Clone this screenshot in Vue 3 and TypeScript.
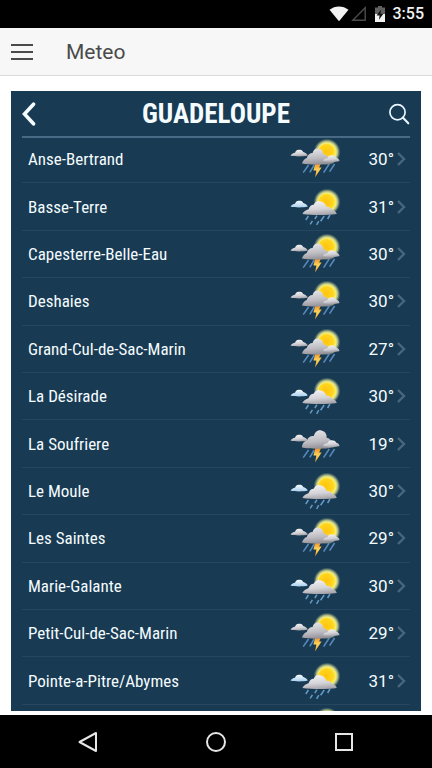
<script setup lang="ts">
type Sky = 'storm' | 'rain' | 'thunder'

interface Place {
  name: string
  temp: number
  sky: Sky
}

const skyLabels: Record<Sky, string> = {
  storm: 'Orages et éclaircies',
  rain: 'Averses',
  thunder: 'Orages',
}

const places: Place[] = [
  { name: 'Anse-Bertrand', temp: 30, sky: 'storm' },
  { name: 'Basse-Terre', temp: 31, sky: 'rain' },
  { name: 'Capesterre-Belle-Eau', temp: 30, sky: 'storm' },
  { name: 'Deshaies', temp: 30, sky: 'storm' },
  { name: 'Grand-Cul-de-Sac-Marin', temp: 27, sky: 'storm' },
  { name: 'La Désirade', temp: 30, sky: 'rain' },
  { name: 'La Soufriere', temp: 19, sky: 'thunder' },
  { name: 'Le Moule', temp: 30, sky: 'rain' },
  { name: 'Les Saintes', temp: 29, sky: 'storm' },
  { name: 'Marie-Galante', temp: 30, sky: 'rain' },
  { name: 'Petit-Cul-de-Sac-Marin', temp: 29, sky: 'storm' },
  { name: 'Pointe-a-Pitre/Abymes', temp: 31, sky: 'rain' },
]
</script>

<template>
  <div class="screen">
    <div class="status">
      <svg class="wifi" viewBox="0 0 20 16" aria-hidden="true">
        <path d="M0.5 3.8C6 -0.7 14 -0.7 19.5 3.8L10 15.3Z" fill="#f2f2f2" />
      </svg>
      <svg class="signal" viewBox="0 0 16 16" aria-hidden="true">
        <path d="M1.8 14.2H14.2V1.8Z" fill="none" stroke="#4c4c4c" stroke-width="1.4" />
      </svg>
      <svg class="battery" viewBox="0 0 10 16" aria-hidden="true">
        <path d="M0 1.5H3V0H7V1.5H10V8H0Z" fill="#606060" />
        <path d="M0 8H10V16H0Z" fill="#f2f2f2" />
        <path d="M6 3.5L1.6 9.5H4.6L4 13.8L8.4 7.8H5.4Z" fill="#111" />
      </svg>
      <span class="clock">3:55</span>
    </div>

    <header class="appbar">
      <button class="menu" type="button" aria-label="Menu">
        <svg viewBox="0 0 22 18" aria-hidden="true">
          <path d="M0 2H22M0 9H22M0 16H22" stroke="#4a4a4a" stroke-width="2" />
        </svg>
      </button>
      <h1>Meteo</h1>
    </header>

    <main>
      <section class="panel">
        <div class="heading">
          <button class="back" type="button" aria-label="Retour">
            <svg viewBox="0 0 14 24" aria-hidden="true">
              <path d="M11.5 2.2L2.5 12L11.5 21.8" fill="none" stroke="#f4fcff" stroke-width="3.6" stroke-linecap="round" />
            </svg>
          </button>
          <h2>GUADELOUPE</h2>
          <button class="search" type="button" aria-label="Rechercher">
            <svg viewBox="0 0 22 22" aria-hidden="true">
              <circle cx="9.5" cy="9.3" r="7.6" fill="none" stroke="#eaf6ff" stroke-width="1.7" />
              <path d="M14.8 14.6L20.3 20.3" stroke="#eaf6ff" stroke-width="2.1" stroke-linecap="round" />
            </svg>
          </button>
        </div>

        <!-- Shared gradients and artwork for the weather icons -->
        <svg class="defs" aria-hidden="true">
          <defs>
            <radialGradient id="glow">
              <stop offset="0.66" stop-color="#f4f08e" />
              <stop offset="0.8" stop-color="#c5cd8a" stop-opacity="0.85" />
              <stop offset="1" stop-color="#7f9a7c" stop-opacity="0" />
            </radialGradient>
            <radialGradient id="disc" cx="0.45" cy="0.5">
              <stop offset="0" stop-color="#ffc40f" />
              <stop offset="0.8" stop-color="#ffd51e" />
              <stop offset="1" stop-color="#fae84a" />
            </radialGradient>
            <linearGradient id="cloud" x1="0.3" y1="0" x2="0.5" y2="1">
              <stop offset="0" stop-color="#f4f4f6" />
              <stop offset="0.6" stop-color="#d3d3d8" />
              <stop offset="1" stop-color="#a3a3a9" />
            </linearGradient>
            <linearGradient id="dark" x1="0.3" y1="0" x2="0.5" y2="1">
              <stop offset="0" stop-color="#e6e5e8" />
              <stop offset="0.6" stop-color="#bdbcc2" />
              <stop offset="1" stop-color="#918f95" />
            </linearGradient>
            <linearGradient id="blue" x1="0" y1="0" x2="0" y2="1">
              <stop offset="0" stop-color="#f7fcff" />
              <stop offset="1" stop-color="#a9cfee" />
            </linearGradient>
            <linearGradient id="bolt" x1="0" y1="0" x2="0" y2="1">
              <stop offset="0" stop-color="#f08a1c" />
              <stop offset="0.5" stop-color="#ffd55a" />
              <stop offset="1" stop-color="#f59a25" />
            </linearGradient>
            <g id="sun">
              <circle cx="39" cy="14" r="13.5" fill="url(#glow)" />
              <circle cx="39" cy="14" r="8.8" fill="url(#disc)" />
            </g>
            <path
              id="puff"
              d="M2.5 17.6C3.4 15.8 5.2 15.2 7 14.8C7.8 12.4 9.4 11.3 11.4 11.8C13.2 11.2 14.8 12.6 15.2 14C17 14.4 19 15.6 19.8 17.6C15 18.8 7 18.8 2.5 17.6Z"
            />
            <g id="downpour">
              <path
                d="M20.6 27L15.2 34.6M26.2 27L21.8 34.4M41.2 26L35.6 34.6M46.6 26L41.6 33.6"
                fill="none" stroke="#5789bd" stroke-width="1.6"
              />
              <path d="M27.4 25H33L31.2 29.4H33.6L27 39.4L28.4 32.4H25.4Z" fill="url(#bolt)" />
            </g>
            <path
              id="sidecloud"
              d="M34.8 23C35.6 21.2 37.4 20.4 39.4 20.2C40.2 17.6 42.6 16.6 44.8 17.4C47 17.2 48.2 18.8 48.6 20C50.2 20.2 51.3 21.4 51.6 23C47 24.4 40 24.4 34.8 23Z"
              fill="url(#cloud)"
            />
          </defs>
          <symbol id="sky-storm" viewBox="0 0 54 42">
            <use href="#sun" />
            <use href="#puff" fill="url(#cloud)" />
            <use href="#downpour" />
            <path
              d="M14 25.6C14.6 23.2 16.4 20.8 18.8 20C19.4 17 21.8 15 24.6 15C25.4 11.6 28 10 30.6 10.8C33.4 11.2 35.2 13.4 35.4 16C38 16.6 40 18.4 41 21L46 24.6C40 27 22 27.2 14 25.6Z"
              fill="url(#dark)"
            />
            <use href="#sidecloud" />
          </symbol>
          <symbol id="sky-rain" viewBox="0 0 54 42">
            <use href="#sun" y="2" />
            <use href="#puff" y="3" fill="url(#blue)" />
            <path
              d="M20.4 30L17.8 34M29 29.6L26.8 33M36.2 30L32.6 35.2M42 29L39.6 33M24.4 34.8L22.2 38.4M30.8 35.2L28.6 38.8"
              fill="none" stroke="#649bc9" stroke-width="1.5"
            />
            <path
              d="M14.4 28C15.5 25.4 18 24 20.5 23.2C21.8 19.8 23.8 18.6 25.7 18.8C27 15.3 30.4 14 33 15.6C36 16.3 37.6 18.6 38.4 20.8C41.2 20.4 43.4 21.8 44.4 24C46.8 24.8 48.4 26.2 48.8 28C39 29.4 24 29.4 14.4 28Z"
              fill="url(#cloud)"
            />
          </symbol>
          <symbol id="sky-thunder" viewBox="0 0 54 42">
            <use href="#puff" fill="url(#cloud)" />
            <use href="#downpour" />
            <path
              d="M14 24.6C14 21.2 15.6 18 19 17.4C20 14 23 12.4 25.8 13C26.8 8.8 30.4 6.2 34 7.8C37.6 8.8 39 11.6 38.6 14.8C41.4 15 43 17 43.6 20L48 23.6C42 26.2 22 26.4 14 24.6Z"
              fill="url(#dark)"
            />
            <use href="#sidecloud" />
          </symbol>
        </svg>

        <div class="viewport">
          <ul class="list">
            <li v-for="place in places" :key="place.name">
              <a class="row" href="#">
                <span class="name">{{ place.name }}</span>
                <svg class="sky" role="img" :aria-label="skyLabels[place.sky]">
                  <use :href="`#sky-${place.sky}`" />
                </svg>
                <span class="temp">{{ place.temp }}°</span>
                <svg class="chevron" viewBox="0 0 9 14" aria-hidden="true">
                  <path d="M1 1L7 7L1 13" fill="none" stroke="#48677f" stroke-width="2.4" />
                </svg>
              </a>
            </li>
            <li aria-hidden="true">
              <div class="row">
                <span class="name"></span>
                <svg class="sky"><use href="#sky-storm" /></svg>
                <span class="temp"></span>
                <span class="chevron"></span>
              </div>
            </li>
          </ul>
        </div>
      </section>
    </main>

    <nav class="navbar">
      <button type="button" aria-label="Précédent">
        <svg viewBox="0 0 22 22" aria-hidden="true">
          <path d="M19 2V20L2.5 11Z" fill="none" stroke="#e6e6e6" stroke-width="2" stroke-linejoin="round" />
        </svg>
      </button>
      <button type="button" aria-label="Accueil">
        <svg viewBox="0 0 22 22" aria-hidden="true">
          <circle cx="11" cy="11" r="9" fill="none" stroke="#e6e6e6" stroke-width="2" />
        </svg>
      </button>
      <button type="button" aria-label="Applications récentes">
        <svg viewBox="0 0 22 22" aria-hidden="true">
          <rect x="3" y="3" width="16" height="16" fill="none" stroke="#e6e6e6" stroke-width="2" />
        </svg>
      </button>
    </nav>
  </div>
</template>

<style>
body {
  margin: 0;
  background: #fff;
}
</style>

<style scoped>
.screen {
  display: flex;
  flex-direction: column;
  height: 100vh;
  font-family: Roboto, "Liberation Sans", sans-serif;
}

button {
  display: flex;
  align-items: center;
  justify-content: center;
  padding: 0;
  border: 0;
  background: none;
  cursor: pointer;
}

.status {
  display: flex;
  flex: none;
  align-items: center;
  justify-content: flex-end;
  height: 28px;
  padding-right: 8px;
  background: #000;
  color: #f2f2f2;
}

.wifi {
  width: 20px;
  height: 16px;
}

.signal {
  width: 16px;
  height: 16px;
  margin-left: 2px;
}

.battery {
  width: 10px;
  height: 16px;
  margin: 0 8px;
}

.clock {
  font-size: 16px;
  font-weight: 500;
  line-height: 28px;
}

.appbar {
  display: flex;
  flex: none;
  align-items: center;
  gap: 33px;
  height: 47px;
  padding: 0 11px;
  border-bottom: 1px solid #dcdcdc;
  background: #f7f7f7;
}

.menu svg {
  width: 22px;
  height: 18px;
}

.appbar h1 {
  margin: 0;
  color: #4a4a4a;
  font-size: 21px;
  font-weight: 400;
}

main {
  display: flex;
  flex: 1;
  min-height: 0;
  padding: 15px 11px 4px;
}

.panel {
  display: flex;
  flex: 1;
  flex-direction: column;
  min-width: 0;
  background: #183a52;
  color: #f4fcff;
  font-family: "Roboto Condensed", Roboto, "Liberation Sans", sans-serif;
}

.heading {
  display: grid;
  flex: none;
  grid-template-columns: 22px 1fr 22px;
  align-items: center;
  height: 45px;
  margin: 0 11px;
  border-bottom: 2px solid #486a85;
}

.heading h2 {
  margin: 0;
  font-size: 27px;
  font-weight: 700;
  line-height: 32px;
  text-align: center;
}

.back {
  justify-content: flex-start;
}

.back svg {
  width: 14px;
  height: 24px;
}

.search svg {
  width: 22px;
  height: 22px;
}

.defs {
  position: absolute;
  width: 0;
  height: 0;
}

.viewport {
  flex: 1;
  min-height: 0;
  margin-top: -2px;
  padding: 0 11px;
  overflow: hidden;
}

/* Twelve rows fill the view, and the next one peeks out below them. */
.list {
  display: grid;
  grid-auto-rows: calc((100% - 6px) / 12);
  height: 100%;
  margin: 0;
  padding: 0;
  list-style: none;
}

.row {
  display: grid;
  box-sizing: border-box;
  grid-template-columns: 1fr 54px 52px 12px;
  align-items: center;
  height: 100%;
  padding: 0 4px 0 6px;
  border-bottom: 1px solid #26475f;
  color: inherit;
  text-decoration: none;
}

.name {
  font-size: 17px;
  line-height: 20px;
}

.sky {
  width: 54px;
  height: 42px;
}

.temp {
  font-family: Roboto, "Liberation Sans", sans-serif;
  font-size: 17px;
  line-height: 20px;
  text-align: right;
}

.chevron {
  justify-self: end;
  width: 9px;
  height: 14px;
}

.navbar {
  display: flex;
  flex: none;
  align-items: center;
  justify-content: center;
  gap: 106px;
  height: 53px;
  background: #000;
}

.navbar svg {
  width: 22px;
  height: 22px;
}
</style>
